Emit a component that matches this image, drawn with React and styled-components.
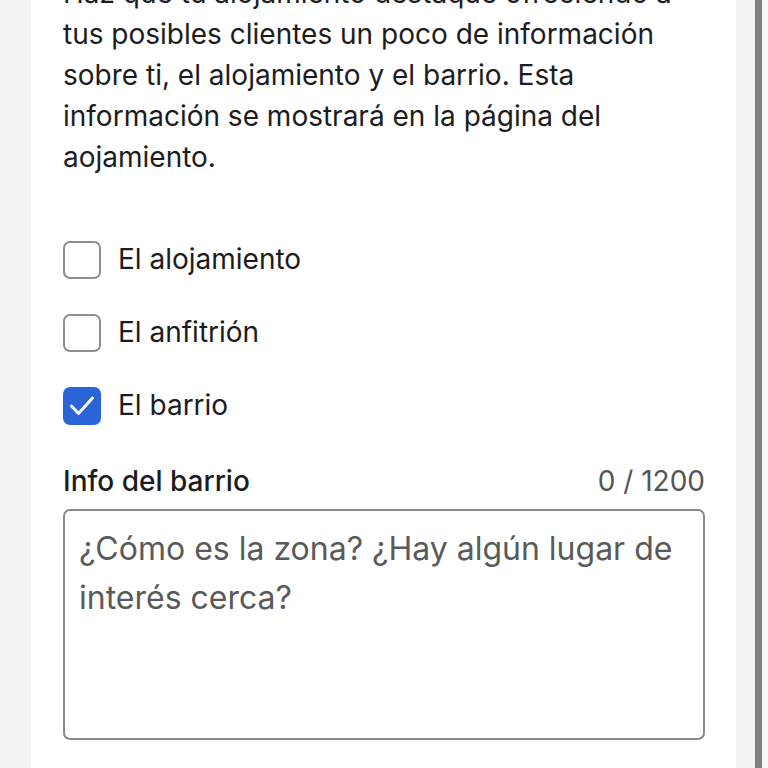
import React from 'react';
import styled, { createGlobalStyle } from 'styled-components';

const GlobalStyle = createGlobalStyle`
  html, body {
    margin: 0;
    padding: 0;
    height: 100%;
    overflow: hidden;
    background: #f2f2f2;
  }
  body {
    font-family: Inter, "Noto Sans", sans-serif;
    -webkit-font-smoothing: antialiased;
  }
`;

const Screen = styled.div`
  display: flex;
  height: 768px;
  overflow: hidden;
  background: #f2f2f2;
`;

const Gutter = styled.div`
  flex: 0 0 ${(p) => p.w}px;
  background: ${(p) => p.bg || '#f2f2f2'};
`;

const Card = styled.main`
  flex: 0 0 705px;
  background: #ffffff;
  padding: 0 31px 0 32px;
  box-sizing: border-box;
`;

/* page is scrolled: the first line of the intro sits under the top edge */
const Scroll = styled.div`
  margin-top: -27px;
`;

const Intro = styled.p`
  margin: 0;
  font-size: 28px;
  line-height: 41px;
  color: #1c1c1e;
`;

const Options = styled.div`
  display: flex;
  flex-direction: column;
  gap: 34px;
  margin-top: 62px;
`;

const Option = styled.label`
  display: flex;
  align-items: center;
  gap: 17px;
  font-size: 28px;
  line-height: 39px;
  color: #1c1c1e;
`;

const Box = styled.span`
  flex: 0 0 auto;
  width: 38px;
  height: 38px;
  box-sizing: border-box;
  border-radius: 7px;
  border: ${(p) => (p.checked ? 'none' : '2px solid #8e8e8e')};
  background: ${(p) => (p.checked ? '#2b64d8' : '#ffffff')};
  display: flex;
  align-items: center;
  justify-content: center;
`;

const FieldHead = styled.div`
  display: flex;
  justify-content: space-between;
  align-items: center;
  margin-top: 41px;
  font-size: 28px;
  line-height: 30px;
`;

const FieldLabel = styled.span`
  font-weight: 500;
  color: #1c1c1e;
`;

const Counter = styled.span`
  color: #555555;
`;

const TextArea = styled.textarea`
  display: block;
  width: 100%;
  height: 231px;
  margin-top: 13px;
  box-sizing: border-box;
  padding: 13px 12px 13px 14px;
  border: 2px solid #8a8a8a;
  border-radius: 7px;
  font-family: inherit;
  font-size: 32px;
  line-height: 49px;
  color: #1c1c1e;
  resize: none;
  outline: none;
  &::placeholder {
    color: #5a5a5a;
    opacity: 1;
  }
`;

const Thumb = styled.div`
  flex: 0 0 7px;
  background: #7f7f7f;
`;

const Check = () => (
  <svg width="26" height="22" viewBox="0 0 26 22" fill="none">
    <path d="M2.5 11 L9.5 18.5 L23.5 3" stroke="#ffffff" strokeWidth="3" strokeLinecap="round" strokeLinejoin="round" />
  </svg>
);

const options = [
  { label: 'El alojamiento', checked: false },
  { label: 'El anfitrión', checked: false },
  { label: 'El barrio', checked: true },
];

export default function App() {
  return (
    <Screen>
      <GlobalStyle />
      <Gutter w={31} />
      <Card>
        <Scroll>
          <Intro>
            Haz que tu alojamiento destaque ofreciendo a tus posibles clientes un poco de información
            sobre ti, el alojamiento y el barrio. Esta información se mostrará en la página del
            aojamiento.
          </Intro>
          <Options>
            {options.map((o) => (
              <Option key={o.label}>
                <Box checked={o.checked}>{o.checked && <Check />}</Box>
                {o.label}
              </Option>
            ))}
          </Options>
          <FieldHead>
            <FieldLabel>Info del barrio</FieldLabel>
            <Counter>0 / 1200</Counter>
          </FieldHead>
          <TextArea placeholder="¿Cómo es la zona? ¿Hay algún lugar de interés cerca?" />
        </Scroll>
      </Card>
      <Gutter w={19} />
      <Thumb />
      <Gutter w={6} bg="#f6f6f6" />
    </Screen>
  );
}
